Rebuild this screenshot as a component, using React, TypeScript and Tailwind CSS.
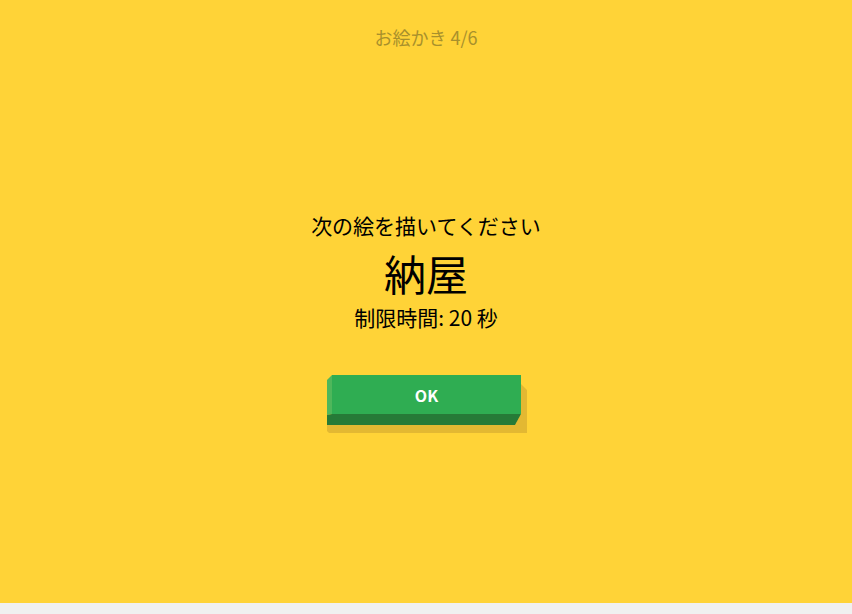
import React from "react";

// 3D "OK" button: a flat front face with a lit left side, a dark bottom edge
// and a drop shadow drawn underneath.
function OkButton() {
  return (
    <div className="relative w-[200px] h-[58px]">
      <svg className="absolute inset-0" width="200" height="58" viewBox="0 0 200 58">
        <polygon
          points="194,9 200,15 200,58 2,58 0,56 0,50 188,50 194,39"
          fill="#e3b832"
        />
        <polygon points="0,5 5,0 5,39 0,40" fill="#4fb75b" />
        <polygon points="0,40 5,39 194,39 188,50 0,50" fill="#267a37" />
        <rect x="5" y="0" width="189" height="39" fill="#2fad52" />
      </svg>
      <button className="absolute left-[5px] top-0 w-[189px] h-[39px] flex items-center justify-center text-white font-semibold text-[16px] leading-none">
        OK
      </button>
    </div>
  );
}

export default function App() {
  return (
    <div
      className="min-h-screen bg-[#f0f0f0]"
      style={{ fontFamily: '"Noto Sans CJK JP", "Noto Sans", sans-serif' }}
    >
      <div className="h-[603px] bg-[#ffd337] flex flex-col items-center">
        <div className="pt-[25px] text-[18px] leading-[24px] text-[#a8902c]">お絵かき 4/6</div>
        <div className="mt-[162px] text-[21px] leading-[28px] text-black">次の絵を描いてください</div>
        <div className="mt-[9px] text-[42px] leading-[50px] text-black">納屋</div>
        <div className="mt-[5px] text-[21px] leading-[28px] text-black">制限時間: 20 秒</div>
        <div className="mt-[44px] ml-[2px]">
          <OkButton />
        </div>
      </div>
    </div>
  );
}
